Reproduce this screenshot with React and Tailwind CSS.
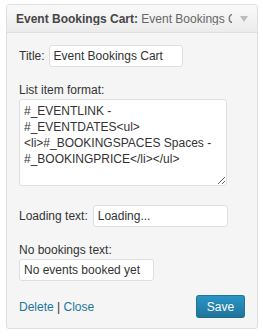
import React from 'react';

// Widget panel (WP admin style)
const Field = ({ className, value }) => (
  <input
    readOnly
    value={value}
    className={`h-[22px] rounded-[3px] border border-[#dfdfdf] bg-white px-[4px] text-[12px] text-[#333] outline-none ${className}`}
  />
);

export default function App() {
  const format = '#_EVENTLINK -\n#_EVENTDATES<ul>\n<li>#_BOOKINGSPACES Spaces -\n#_BOOKINGPRICE</li></ul>';

  return (
    <div className="min-h-[336px] bg-white pt-[4px] pl-[6px] font-['Liberation_Sans',Arial,sans-serif]">
      <div className="w-[252px] rounded-[3px] border border-[#dfdfdf] bg-[#f5f5f5] overflow-hidden">
        {/* Cabeçalho */}
        <div className="flex h-[28px] items-center border-b border-[#dfdfdf] bg-gradient-to-b from-[#f9f9f9] to-[#ececec] pl-[9px] pr-[9px]">
          <div className="flex-1 overflow-hidden whitespace-nowrap text-[12px] leading-none">
            <span className="font-bold text-[#464646]">Event Bookings Cart:</span>
            <span className="text-[#666]"> Event Bookings Cart</span>
          </div>
          <svg width="8" height="6" viewBox="0 0 8 6" className="ml-[8px] shrink-0">
            <path d="M0 0 L8 0 L4 6 Z" fill="#bbb" />
          </svg>
        </div>

        {/* Corpo */}
        <div className="px-[12px] pt-[12px] pb-[10px] text-[12px] text-[#333]">
          <div className="flex items-center gap-[4px]">
            <label>Title:</label>
            <Field className="w-[134px]" value="Event Bookings Cart" />
          </div>

          <div className="mt-[15px] leading-[16px]">List item format:</div>
          <textarea
            readOnly
            value={format}
            className="mt-[1px] block h-[87px] w-[208px] rounded-[3px] border border-[#dfdfdf] bg-white px-[4px] pt-[3px] text-[12px] leading-[16px] text-[#333] outline-none"
          />

          <div className="mt-[19px] flex items-center gap-[5px]">
            <label>Loading text:</label>
            <Field className="w-[135px]" value="Loading..." />
          </div>

          <div className="mt-[15px] leading-[16px]">No bookings text:</div>
          <Field className="mt-[1px] block w-[135px]" value="No events booked yet" />

          <div className="mt-[14px] flex items-center justify-between">
            <div className="pt-[1px]">
              <a className="text-[#21759b]">Delete</a>
              <span className="text-[#333]"> | </span>
              <a className="text-[#21759b]">Close</a>
            </div>
            <button className="h-[23px] w-[49px] rounded-[3px] border border-[#21759b] border-b-[#1e6a8d] bg-gradient-to-b from-[#2a95c5] to-[#21759b] text-[12px] text-white [text-shadow:0_-1px_0_rgba(0,0,0,0.1)]">
              Save
            </button>
          </div>
        </div>
      </div>
    </div>
  );
}
